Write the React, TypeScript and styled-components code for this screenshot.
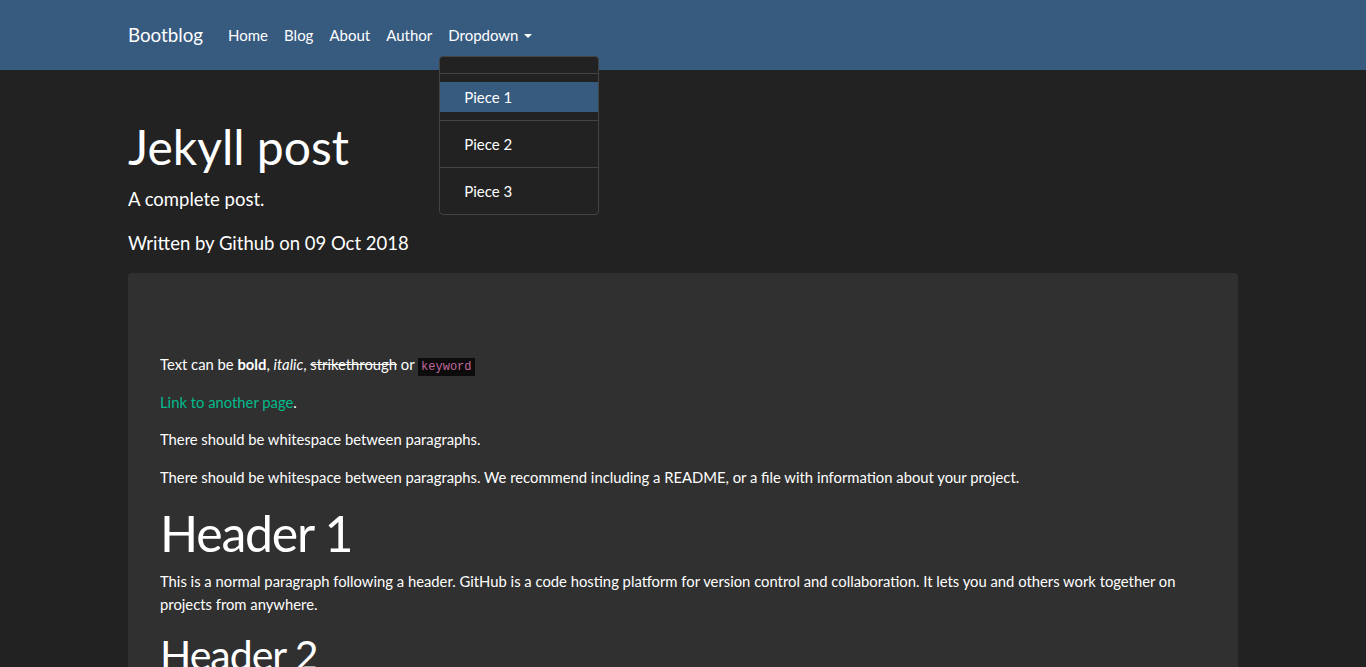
import styled, { createGlobalStyle } from 'styled-components';

const GlobalStyle = createGlobalStyle`
  html, body {
    margin: 0;
    padding: 0;
    background-color: #222222;
    color: #ffffff;
    font-family: Lato, "Liberation Sans", sans-serif;
    font-size: 15px;
    line-height: 1.5;
  }

  * {
    box-sizing: border-box;
  }
`;

const Navbar = styled.nav`
  background-color: #375a7f;
  height: 70px;
  padding: 15px 0;
`;

const Container = styled.div`
  width: 1140px;
  margin: 0 auto;
  padding: 0 15px;
`;

const NavInner = styled(Container)`
  display: flex;
  align-items: center;
  height: 40px;
`;

const Brand = styled.a`
  font-size: 18.75px;
  color: #ffffff;
  text-decoration: none;
  margin-right: 17px;
  line-height: 1.5;
`;

const NavList = styled.ul`
  display: flex;
  list-style: none;
  margin: 0;
  padding: 0;
`;

const NavItem = styled.li`
  position: relative;
`;

const NavLink = styled.a`
  display: block;
  padding: 8px 8px;
  color: #ffffff;
  text-decoration: none;
  font-size: 15px;
  line-height: 22.5px;
`;

const Caret = styled.span`
  display: inline-block;
  margin-left: 5px;
  vertical-align: 3px;
  border-top: 4.5px solid #ffffff;
  border-left: 4.5px solid transparent;
  border-right: 4.5px solid transparent;
`;

const DropdownMenu = styled.div`
  position: absolute;
  top: 40px;
  left: -1px;
  width: 160px;
  padding: 8px 0;
  background-color: #222222;
  border: 1px solid #444444;
  border-radius: 4px;
  z-index: 10;
`;

const Divider = styled.div`
  height: 0;
  margin: 8px 0;
  border-top: 1px solid #444444;
`;

const DropdownItem = styled.a<{ $active?: boolean }>`
  display: block;
  padding: 3.75px 24px;
  line-height: 22.5px;
  font-size: 15px;
  color: #ffffff;
  text-decoration: none;
  background-color: ${(p) => (p.$active ? '#375a7f' : 'transparent')};
`;

const Header = styled.header`
  padding-top: 47.5px;
`;

const Title = styled.h1`
  font-size: 48px;
  font-weight: 400;
  line-height: 1.2;
  margin: 0;
`;

const Subtitle = styled.p`
  font-size: 18.5px;
  line-height: 1.2;
  margin: 13px 0 0;
`;

const Byline = styled.p`
  font-size: 18.5px;
  line-height: 1.2;
  margin: 22px 0 0;
`;

const Card = styled.article`
  margin-top: 19px;
  background-color: #303030;
  border-radius: 4px;
  padding: 80px 32px 32px;
  font-size: 14.8px;
`;

const Para = styled.p`
  margin: 0 0 15px;
  line-height: 22.5px;
`;

const Strike = styled.s``;

const Code = styled.code`
  font-family: "Liberation Mono", "DejaVu Sans Mono", monospace;
  font-size: 12px;
  line-height: 1;
  color: #c16a9e;
  background-color: #0c0c0c;
  padding: 2px 3px;
`;

const Link = styled.a`
  color: #00bc8c;
  text-decoration: none;
`;

const Heading = styled.h2<{ $size: number; $spacing: number }>`
  font-size: ${(p) => p.$size}px;
  letter-spacing: ${(p) => p.$spacing}px;
  font-weight: 400;
  line-height: 1.3;
  margin: -2px 0 4px;
`;

export default function App() {
  return (
    <>
      <GlobalStyle />
      <Navbar>
        <NavInner>
          <Brand href="#">Bootblog</Brand>
          <NavList>
            <NavItem><NavLink href="#">Home</NavLink></NavItem>
            <NavItem><NavLink href="#">Blog</NavLink></NavItem>
            <NavItem><NavLink href="#">About</NavLink></NavItem>
            <NavItem><NavLink href="#">Author</NavLink></NavItem>
            <NavItem>
              <NavLink href="#">Dropdown<Caret /></NavLink>
              <DropdownMenu>
                <Divider />
                <DropdownItem href="#" $active>Piece 1</DropdownItem>
                <Divider />
                <DropdownItem href="#">Piece 2</DropdownItem>
                <Divider />
                <DropdownItem href="#">Piece 3</DropdownItem>
              </DropdownMenu>
            </NavItem>
          </NavList>
        </NavInner>
      </Navbar>
      <Container>
        <Header>
          <Title>Jekyll post</Title>
          <Subtitle>A complete post.</Subtitle>
          <Byline>Written by Github on 09 Oct 2018</Byline>
        </Header>
        <Card>
          <Para>
            Text can be <b>bold</b>, <i>italic</i>, <Strike>strikethrough</Strike> or <Code>keyword</Code>
          </Para>
          <Para>
            <Link href="#">Link to another page</Link>.
          </Para>
          <Para>There should be whitespace between paragraphs.</Para>
          <Para>
            There should be whitespace between paragraphs. We recommend including a README, or a file with information about your project.
          </Para>
          <Heading $size={50} $spacing={-1.2}>Header 1</Heading>
          <Para>
            This is a normal paragraph following a header. GitHub is a code hosting platform for version control and collaboration. It lets you and others work together on projects from anywhere.
          </Para>
          <Heading as="h3" $size={41} $spacing={-1}>Header 2</Heading>
          <Para>
            This is a blockquote following a header. When something is important enough, you do it even if the odds are not in your favor.
          </Para>
        </Card>
      </Container>
    </>
  );
}
